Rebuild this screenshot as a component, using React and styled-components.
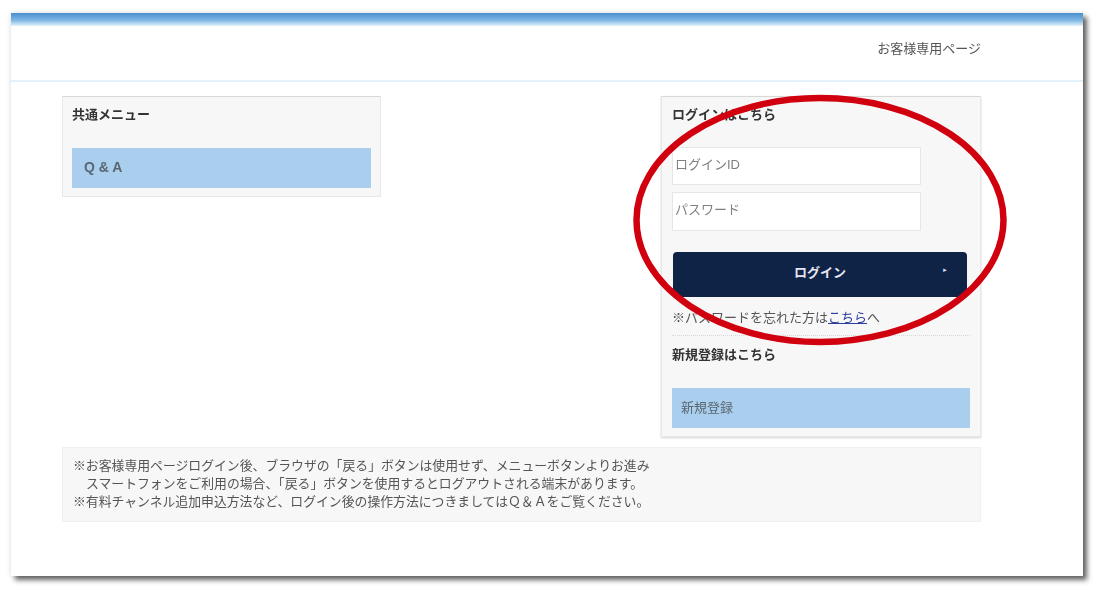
import React from 'react'
import styled, { createGlobalStyle } from 'styled-components'

const GlobalStyle = createGlobalStyle`
  html, body {
    margin: 0;
    padding: 0;
    background: #fff;
  }
  body {
    font-family: "Liberation Sans", "Noto Sans CJK JP", sans-serif;
    font-size: 13px;
    color: #555;
  }
`

const Page = styled.div`
  position: relative;
  width: 1104px;
  height: 598px;
  padding: 13px 21px 22px 11px;
  box-sizing: border-box;
  overflow: hidden;
`

const Frame = styled.div`
  height: 100%;
  background: #fff;
  box-shadow: 4px 4px 5px rgba(0, 0, 0, 0.6), 0 0 6px rgba(0, 0, 0, 0.12);
  filter: blur(0.5px);
`

const TopBar = styled.div`
  height: 13px;
  background: linear-gradient(#4a8fce, #7db6e4 55%, #e4f3fc);
`

const Header = styled.header`
  height: 46px;
  padding: 0 102px 8px 0;
  display: flex;
  justify-content: flex-end;
  align-items: center;
  border-bottom: 2px solid #e3f1fb;
  font-size: 13px;
  line-height: 18px;
`

const Content = styled.main`
  padding: 14px 102px 0 51px;
`

const Columns = styled.div`
  display: flex;
  justify-content: space-between;
  align-items: flex-start;
`

const Card = styled.section`
  width: ${p => (p.$raised ? '320px' : '319px')};
  box-sizing: border-box;
  padding: 9px 10px 8px ${p => (p.$raised ? '10px' : '9px')};
  background: #f7f7f7;
  border: 1px solid #e8e8e8;
  border-top-color: #d8d8d8;
  box-shadow: ${p => (p.$raised ? '0 1px 2px rgba(0, 0, 0, 0.18)' : 'none')};
`

const CardTitle = styled.h2`
  margin: 0 0 24px;
  font-size: 13px;
  line-height: 18px;
  font-weight: 700;
  color: #333;
`

const MenuButton = styled.a`
  display: flex;
  align-items: center;
  height: 40px;
  width: ${p => (p.$wide ? '298px' : '299px')};
  padding: 0 0 ${p => (p.$wide ? '4px' : '2px')} ${p => (p.$wide ? '9px' : '12px')};
  box-sizing: border-box;
  background: #aacfee;
  color: #5a6670;
  font-size: ${p => (p.$wide ? '13px' : '14px')};
  font-weight: ${p => (p.$wide ? 400 : 700)};
`

const Fields = styled.div`
  display: flex;
  flex-direction: column;
  gap: 7px;
  margin-top: -1px;
`

const Field = styled.input`
  width: 249px;
  height: ${p => p.$h}px;
  padding: 0 2px 4px;
  box-sizing: border-box;
  background: #fff;
  border: 1px solid #e6e6e6;
  font-family: inherit;
  font-size: 13px;
  outline: none;
  &::placeholder {
    color: #808080;
    opacity: 1;
  }
`

const LoginButton = styled.button`
  position: relative;
  display: block;
  width: 294px;
  height: 45px;
  margin: 21px 0 0 1px;
  padding: 0 0 6px;
  background: #0f2347;
  border: none;
  border-radius: 4px;
  color: #e8e4f2;
  font-family: inherit;
  font-size: 13px;
  font-weight: 700;
`

const Chevron = styled.span`
  position: absolute;
  right: 19px;
  top: 14px;
  font-size: 6px;
  line-height: 8px;
  color: #d8dde8;
`

const Forgot = styled.p`
  margin: 12px 0 0;
  font-size: 13px;
  line-height: 18px;
  color: #555;
`

const TextLink = styled.a`
  color: #2a3f9e;
  text-decoration: underline;
`

const Divider = styled.hr`
  margin: 8px 0 10px;
  border: none;
  border-top: 1px dotted #d8d8d8;
  width: 298px;
`

const Notice = styled.div`
  margin-top: 10px;
  height: 75px;
  padding: 9px 10px 0;
  box-sizing: border-box;
  background: #f7f7f7;
  border: 1px solid #f0f0f0;
  font-size: 12.85px;
  line-height: 18px;
  color: #555;
`

const NoticeLine = styled.div`
  padding-left: ${p => (p.$indent ? '13px' : '0')};
  white-space: nowrap;
`

const Annotation = styled.svg`
  position: absolute;
  left: 0;
  top: 0;
  width: 1104px;
  height: 598px;
  pointer-events: none;
`

export default function App() {
  return (
    <>
      <GlobalStyle />
      <Page>
        <Frame>
          <TopBar />
          <Header>お客様専用ページ</Header>
          <Content>
            <Columns>
              <Card>
                <CardTitle>共通メニュー</CardTitle>
                <MenuButton>Q &amp; A</MenuButton>
              </Card>
              <Card $raised>
                <CardTitle>ログインはこちら</CardTitle>
                <Fields>
                  <Field $h={38} placeholder="ログインID" />
                  <Field $h={39} type="password" placeholder="パスワード" />
                </Fields>
                <LoginButton>
                  ログイン
                  <Chevron>►</Chevron>
                </LoginButton>
                <Forgot>
                  ※パスワードを忘れた方は<TextLink>こちら</TextLink>へ
                </Forgot>
                <Divider />
                <CardTitle>新規登録はこちら</CardTitle>
                <MenuButton $wide>新規登録</MenuButton>
              </Card>
            </Columns>
            <Notice>
              <NoticeLine>※お客様専用ページログイン後、ブラウザの「戻る」ボタンは使用せず、メニューボタンよりお進み</NoticeLine>
              <NoticeLine $indent>スマートフォンをご利用の場合、「戻る」ボタンを使用するとログアウトされる端末があります。</NoticeLine>
              <NoticeLine>※有料チャンネル追加申込方法など、ログイン後の操作方法につきましてはＱ＆Ａをご覧ください。</NoticeLine>
            </Notice>
          </Content>
        </Frame>
        <Annotation viewBox="0 0 1104 598">
          <ellipse cx="820" cy="220" rx="183.5" ry="122" fill="none" stroke="#d0000f" strokeWidth="6.5" />
        </Annotation>
      </Page>
    </>
  )
}
